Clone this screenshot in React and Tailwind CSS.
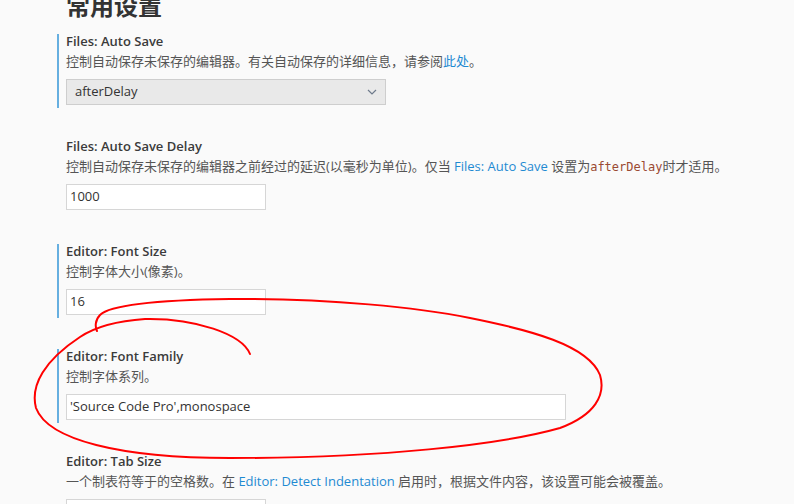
import React from 'react';

const sans = "font-['Segoe_UI','Open_Sans','Noto_Sans_CJK_SC',sans-serif]";

const Link = ({ children }) => <span className="text-[#1f8ad2]">{children}</span>;
const Code = ({ children }) => (
  <span className="font-['DejaVu_Sans_Mono','Liberation_Mono',monospace] text-[12px] text-[#9b4a33]">{children}</span>
);

const Setting = ({ label, modified, children, control }) => (
  <div className={`flex flex-col pl-[7px] pb-[3px] border-l-2 ${modified ? 'border-[#66afe0]' : 'border-transparent'}`}>
    <div className="h-[15px] leading-[14px] text-[13px] font-semibold text-[#3b3b3b]">{label}</div>
    <div className="h-[24px] leading-[24px] text-[13px] text-[#555] whitespace-nowrap">{children}</div>
    <div className="mt-[6px]">{control}</div>
  </div>
);

const TextBox = ({ value, width }) => (
  <div className={`${width} h-[26px] border border-[#d6d6d6] bg-white pl-[3px] flex items-center text-[13px] text-[#333]`}>
    {value}
  </div>
);

const Select = ({ value }) => (
  <div className="w-[320px] h-[26px] border border-[#cecece] bg-[#e9e9e9] pl-[8px] pr-[8px] flex items-center justify-between text-[13px] text-[#333]">
    <span>{value}</span>
    <svg width="10" height="6" viewBox="0 0 10 6" fill="none">
      <path d="M1 1l4 4 4-4" stroke="#6f7b8c" strokeWidth="1.2" />
    </svg>
  </div>
);

const Scribble = () => (
  <svg className="absolute inset-0 pointer-events-none" width="794" height="504" viewBox="0 0 794 504" fill="none">
    <path
      d="M250,354 C242,334 195,318 145,319 C115,321 95,327 80,337 C45,360 30,385 36,408 C48,440 120,458 230,458 C380,458 500,445 560,428 C595,415 606,395 600,375 C588,345 530,330 470,318 C420,308 330,298 230,299 C160,300 110,305 100,315 C95,320 95,327 97,331"
      stroke="#ff0000"
      strokeWidth="2"
      strokeLinecap="round"
    />
  </svg>
);

export default function App() {
  return (
    <div className={`relative w-[794px] h-[504px] overflow-hidden bg-[#fafafa] ${sans}`}>
      <div className="flex flex-col pl-[57px]">
        <h1 className="ml-[9px] mt-[-10px] h-[44px] text-[24px] leading-[32px] font-bold text-[#333]">常用设置</h1>
        <div className="flex flex-col gap-[31px]">
          <Setting label="Files: Auto Save" modified control={<Select value="afterDelay" />}>
            控制自动保存未保存的编辑器。有关自动保存的详细信息，请参阅<Link>此处</Link>。
          </Setting>
          <Setting label="Files: Auto Save Delay" control={<TextBox value="1000" width="w-[200px]" />}>
            控制自动保存未保存的编辑器之前经过的延迟(以毫秒为单位)。仅当 <Link>Files: Auto Save</Link> 设置为<Code>afterDelay</Code>时才适用。
          </Setting>
          <Setting label="Editor: Font Size" modified control={<TextBox value="16" width="w-[200px]" />}>
            控制字体大小(像素)。
          </Setting>
          <Setting label="Editor: Font Family" modified control={<TextBox value="'Source Code Pro',monospace" width="w-[500px]" />}>
            控制字体系列。
          </Setting>
          <Setting label="Editor: Tab Size" control={<TextBox value="" width="w-[200px]" />}>
            一个制表符等于的空格数。在 <Link>Editor: Detect Indentation</Link> 启用时，根据文件内容，该设置可能会被覆盖。
          </Setting>
        </div>
      </div>
      <Scribble />
    </div>
  );
}
